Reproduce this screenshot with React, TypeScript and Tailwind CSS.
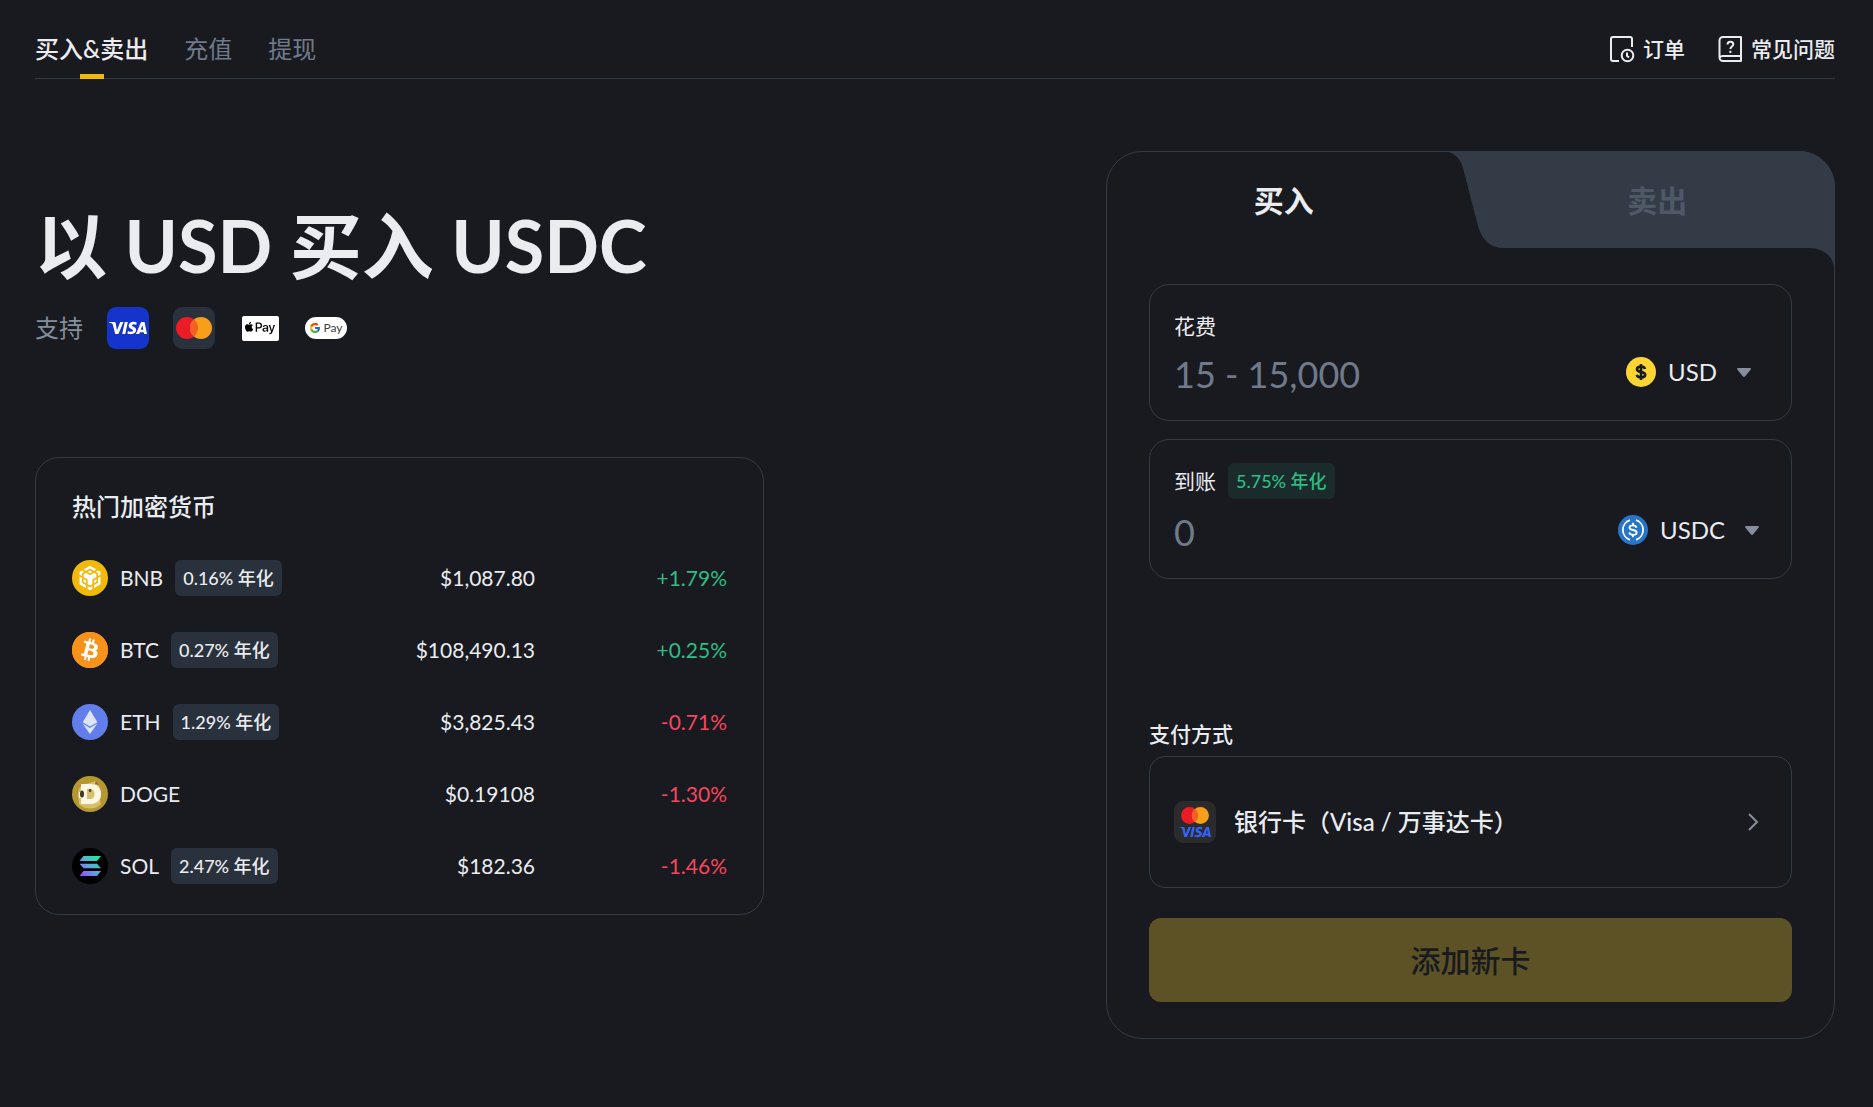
import React from "react";
import { SiBitcoin, SiEthereum, SiVisa } from "react-icons/si";
import { FaApplePay } from "react-icons/fa";
import { FcGoogle } from "react-icons/fc";

function BnbIcon() {
  return (
    <svg viewBox="0 0 24 24" className="size-9 shrink-0" aria-hidden="true">
      <circle cx="12" cy="12" r="12" fill="#F0B90B" />
      <g fill="#fff">
        <path d="M6.6 12v3.17l2.7 1.59v1.86l-4.28-2.51v-5.04L6.6 12ZM6.6 8.83v1.85l-1.58-.93V7.9L6.6 6.97l1.57.93-1.57.93ZM10.43 7.9 12 6.97l1.58.93L12 8.83l-1.57-.93Z" />
        <path d="M7.73 14.52v-1.86l1.57.93v1.85l-1.57-.92ZM10.43 17.43l1.57.93 1.58-.93v1.85L12 20.21l-1.57-.93v-1.85ZM15.82 7.9l1.58-.93 1.57.93v1.85l-1.57.93V8.83l-1.58-.93ZM17.4 15.17V12l1.57-.93v5.04l-4.27 2.51v-1.86l2.7-1.59Z" />
        <path d="m16.27 14.52-1.57.92v-1.85l1.57-.93v1.86ZM16.27 9.48v1.86l-2.69 1.59v3.18L12 17.04l-1.56-.93v-3.18l-2.7-1.59V9.48l1.58-.92L12 10.15l2.69-1.59 1.58.92Z" />
        <path d="M7.73 6.31 12 3.79l4.27 2.52-1.57.93L12 5.64l-2.7 1.6-1.57-.93Z" />
      </g>
    </svg>
  );
}

function BtcIcon() {
  return (
    <svg viewBox="0 0 36 36" className="size-9 shrink-0" aria-hidden="true">
      <circle cx="18" cy="18" r="18" fill="#F7931A" />
      <circle cx="18" cy="18" r="14" fill="#fff" />
      <SiBitcoin size={36} color="#F7931A" />
    </svg>
  );
}

function EthIcon() {
  return (
    <span className="flex size-9 shrink-0 items-center justify-center rounded-full bg-[#627EEA]">
      <SiEthereum className="size-6 text-[#DDE3F8]" aria-hidden="true" />
    </span>
  );
}

function DogeIcon() {
  return (
    <svg viewBox="0 0 36 36" className="size-9 shrink-0" aria-hidden="true">
      <circle cx="18" cy="18" r="18" fill="#B7972F" />
      <path d="M6 19c0-6 3-11 8-11l10-3 3 5c2 3 3 8 1 14l1 4c-6 6-16 6-22 0Z" fill="#D8BF6A" />
      <path
        fillRule="evenodd"
        d="M9 8h9.500c6.500 0 10.500 4 10.500 10s-4 10-10.500 10H9v-6H7v-6h2V8Zm6 5v10h3c3 0 4.500-1.800 4.500-5S21 13 18 13h-3Z"
        fill="#FBF6E6"
      />
      <ellipse cx="10" cy="18" rx="2" ry="3.500" fill="#3F3824" />
      <ellipse cx="18" cy="14.500" rx="1.300" ry="1.800" fill="#5A4A22" />
      <path d="m24 5 3 4-4-1Z" fill="#8A6D22" />
    </svg>
  );
}

function SolIcon() {
  return (
    <svg viewBox="0 0 36 36" className="size-9 shrink-0" aria-hidden="true">
      <defs>
        <linearGradient id="sol" gradientUnits="userSpaceOnUse" x1="27" y1="7" x2="9" y2="29">
          <stop offset="0" stopColor="#14F195" />
          <stop offset="0.5" stopColor="#5FA8DC" />
          <stop offset="1" stopColor="#9945FF" />
        </linearGradient>
      </defs>
      <circle cx="18" cy="18" r="18" fill="#000" />
      <g fill="url(#sol)">
        <path d="M11.500 8h17.500l-4 5h-17.500Z" />
        <path d="M7.500 15.700h17.500l4 4.600h-17.500Z" />
        <path d="M11.500 23h17.500l-4 5h-17.500Z" />
      </g>
    </svg>
  );
}

function UsdIcon() {
  return (
    <svg viewBox="0 0 30 30" className="size-[30px] shrink-0" aria-hidden="true">
      <circle cx="15" cy="15" r="15" fill="#FCD535" />
      <path d="M15 7v16M19 12c-.4-1.500-1.800-2.400-4-2.400-2.400 0-4 1-4 2.700 0 3.900 8.200 1.500 8.200 5.400 0 1.700-1.700 2.700-4.200 2.700-2.300 0-3.900-1-4.300-2.500" fill="none" stroke="#181A20" strokeWidth="2.600" />
    </svg>
  );
}

function UsdcIcon() {
  return (
    <svg viewBox="0 0 30 30" className="size-[30px] shrink-0" aria-hidden="true">
      <circle cx="15" cy="15" r="15" fill="#2775CA" />
      <g fill="none" stroke="#fff" strokeWidth="1.800">
        <path d="M12 5.200a10.300 10.300 0 0 0 0 19.600M18 5.200a10.300 10.300 0 0 1 0 19.600" />
        <path d="M15 7.800v2.400M15 19.800v2.400M18.500 12.700c-.3-1.500-1.600-2.300-3.500-2.300s-3.500.8-3.500 2.300c0 3.400 7.200 1.200 7.200 4.700 0 1.500-1.500 2.400-3.700 2.400-2.100 0-3.500-.9-3.700-2.500" />
      </g>
    </svg>
  );
}

function Mastercard({ className }: { className: string }) {
  return (
    <svg viewBox="0 0 36 22" className={className} aria-hidden="true">
      <circle cx="11" cy="11" r="11" fill="#EB1C26" />
      <circle cx="25" cy="11" r="11" fill="#F79E1B" />
      <path d="M18 2.500a11 11 0 0 1 0 17 11 11 0 0 1 0-17Z" fill="#F26122" />
    </svg>
  );
}

function Caret() {
  return (
    <svg viewBox="0 0 14 9" className="pointer-events-none h-[9px] w-[14px]" aria-hidden="true">
      <path d="M1 0h12c.9 0 1.300.9.700 1.500L8 8.500c-.6.600-1.400.600-2 0L.3 1.500C-.3.900.1 0 1 0Z" fill="#848E9C" />
    </svg>
  );
}

const coins = [
  { name: "BNB", icon: <BnbIcon />, apr: "0.16% 年化", price: "$1,087.80", change: "+1.79%" },
  { name: "BTC", icon: <BtcIcon />, apr: "0.27% 年化", price: "$108,490.13", change: "+0.25%" },
  { name: "ETH", icon: <EthIcon />, apr: "1.29% 年化", price: "$3,825.43", change: "-0.71%" },
  { name: "DOGE", icon: <DogeIcon />, apr: "", price: "$0.19108", change: "-1.30%" },
  { name: "SOL", icon: <SolIcon />, apr: "2.47% 年化", price: "$182.36", change: "-1.46%" },
];

function Header() {
  return (
    <header className="flex h-[79px] items-center justify-between border-b border-[#333B47] pt-5">
      <nav className="flex h-full gap-9 text-2xl text-[#707A8A]">
        <a href="#trade" className="relative flex items-center font-medium text-[#EAECEF]">
          买入&amp;卖出
          <span className="absolute -bottom-px left-1/2 h-[5px] w-6 -translate-x-1/2 bg-[#F0B90B]" />
        </a>
        <a href="#deposit" className="flex items-center">充值</a>
        <a href="#withdraw" className="flex items-center">提现</a>
      </nav>
      <div className="flex gap-8 text-[21px] leading-8 font-medium">
        <a href="#orders" className="flex items-center gap-2">
          <svg viewBox="0 0 26 28" className="h-7 w-[26px]" fill="none" stroke="currentColor" strokeWidth="2" aria-hidden="true">
            <path d="M10 26H4a2 2 0 0 1-2-2V4a2 2 0 0 1 2-2h17a2 2 0 0 1 2 2v8" />
            <circle cx="18.500" cy="20.500" r="5.800" />
            <path d="M18 17.500v3.300l2 1.700" />
          </svg>
          订单
        </a>
        <a href="#faq" className="flex items-center gap-2">
          <svg viewBox="0 0 26 28" className="h-7 w-[26px]" fill="none" stroke="currentColor" strokeWidth="2" aria-hidden="true">
            <path d="M24 21V2H6a3.500 3.500 0 0 0-3.500 3.500v17A3.500 3.500 0 0 0 6 26h18v-5H6a3.500 3.500 0 0 0-3.500 2" strokeLinejoin="round" />
            <path d="M10.500 9.500c0-1.700 1.200-2.700 2.900-2.700s2.900 1 2.900 2.500c0 2.200-2.900 2.200-2.900 4.700M13.400 15.700v2.300" />
          </svg>
          常见问题
        </a>
      </div>
    </header>
  );
}

function PopularCoins() {
  return (
    <section className="mt-[108px] rounded-3xl border border-[#333B47] px-9 pt-[31px] pb-3">
      <h2 className="text-2xl leading-9 font-medium">热门加密货币</h2>
      <table className="mt-[17px] w-full table-fixed text-[21px]">
        <tbody>
          {coins.map((c) => (
            <tr key={c.name} className="h-[72px]">
              <th scope="row" className="w-[42%] p-0 text-left font-normal">
                <div className="flex items-center gap-3">
                  {c.icon}
                  <span>{c.name}</span>
                  {c.apr && (
                    <span className="flex h-9 items-center rounded-md bg-[#29313D] px-2 text-lg font-medium">
                      {c.apr}
                    </span>
                  )}
                </div>
              </th>
              <td className="p-0 text-right">{c.price}</td>
              <td className={c.change.startsWith("+") ? "w-[192px] p-0 text-right text-[#2EBD85]" : "w-[192px] p-0 text-right text-[#F6465D]"}>
                {c.change}
              </td>
            </tr>
          ))}
        </tbody>
      </table>
    </section>
  );
}

function Intro() {
  return (
    <div className="w-full max-w-[729px] pt-[46px]">
      <h1 className="text-[72px] leading-[96px] font-bold">以 USD 买入 USDC</h1>
      <div className="mt-[14px] flex items-center gap-6">
        <span className="text-2xl text-[#848E9C]">支持</span>
        <span className="flex size-[42px] items-center justify-center rounded-[9px] bg-[#1434CB]">
          <SiVisa className="size-[38px] text-white" title="Visa" />
        </span>
        <span className="flex size-[42px] items-center justify-center rounded-[9px] bg-[#29313D]">
          <Mastercard className="h-[22px] w-9" />
        </span>
        <span className="flex w-[42px] justify-center">
          <span className="flex h-[25px] w-[37px] items-center justify-center rounded-xs bg-white">
            <FaApplePay className="size-[30px] text-black" title="Apple Pay" />
          </span>
        </span>
        <span className="flex h-[22px] w-[42px] items-center justify-center rounded-full bg-white text-xs text-[#3C4043]">
          <FcGoogle className="size-3" title="Google" />
          <span className="ml-0.5">Pay</span>
        </span>
      </div>
      <PopularCoins />
    </div>
  );
}

function TradeCard() {
  return (
    <form className="w-full max-w-[729px] rounded-[36px] border border-[#333B47] pb-9">
      <div className="grid grid-cols-2 gap-5 text-3xl font-bold" role="tablist">
        <button type="button" role="tab" aria-selected="true" className="h-24">
          买入
        </button>
        <button type="button" role="tab" aria-selected="false" className="relative h-24 text-[#4F5867]">
          <svg viewBox="0 0 395 118" className="absolute -top-px -right-px h-[118px] w-[395px]" aria-hidden="true">
            <path d="M0 0C13 0 20 6 23 17L38 75C42 89 50 97 64 97H369C384 97 394 106 394 118H395V36C395 16 379 0 359 0Z" fill="#333B47" />
          </svg>
          <span className="relative">卖出</span>
        </button>
      </div>

      <div className="px-[42px] pt-9">
        <div className="rounded-[20px] border border-[#333B47] px-6 pt-[23px] pb-[18px]">
          <label htmlFor="spend" className="block text-[21px] leading-9">花费</label>
          <div className="mt-0.5 flex h-14 items-center justify-between">
            <input id="spend" placeholder="15 - 15,000" className="w-full min-w-0 bg-transparent text-[36px] leading-[54px] outline-none placeholder:text-[#707A8A]" />
            <label className="flex items-center pr-4 pb-1 text-2xl">
              <UsdIcon />
              <select aria-label="支付货币" className="mr-5 ml-3 appearance-none bg-transparent [field-sizing:content]">
                <option>USD</option>
              </select>
              <Caret />
            </label>
          </div>
        </div>

        <div className="mt-[18px] rounded-[20px] border border-[#333B47] px-6 pt-[23px] pb-[19px]">
          <div className="flex items-center gap-3">
            <label htmlFor="receive" className="text-[21px] leading-9">到账</label>
            <span className="flex h-9 items-center rounded-md bg-[#1B2B2B] px-2 text-lg font-medium text-[#2EBD85]">5.75% 年化</span>
          </div>
          <div className="mt-1.5 flex h-[54px] items-center justify-between">
            <input id="receive" placeholder="0" className="w-full min-w-0 bg-transparent text-[36px] leading-[54px] outline-none placeholder:text-[#707A8A]" />
            <label className="flex items-center pr-2 pb-1 text-2xl">
              <UsdcIcon />
              <select aria-label="购买币种" className="mr-5 ml-3 appearance-none bg-transparent [field-sizing:content]">
                <option>USDC</option>
              </select>
              <Caret />
            </label>
          </div>
        </div>

        <h2 className="mt-[137px] text-[21px] leading-9 font-medium">支付方式</h2>
        <button type="button" className="mt-1 flex h-[132px] w-full items-center rounded-2xl border border-[#333B47] px-6 text-2xl font-medium">
          <span className="flex size-[42px] shrink-0 flex-col items-center justify-center gap-0.5 overflow-hidden rounded-[9px] bg-[#2B2B2B]">
            <Mastercard className="h-[17px] w-7 shrink-0" />
            <SiVisa className="-my-2.5 size-8 shrink-0 text-[#3461F5]" aria-hidden="true" />
          </span>
          <span className="ml-[18px]">银行卡（Visa / 万事达卡）</span>
          <svg viewBox="0 0 12 20" className="mr-2 ml-auto h-5 w-3" fill="none" stroke="#848E9C" strokeWidth="2" aria-hidden="true">
            <path d="m2 2 8 8-8 8" />
          </svg>
        </button>
        <button type="button" disabled className="mt-[30px] h-[84px] w-full rounded-xl bg-[#5D5226] text-3xl font-medium text-[#181A20]">
          添加新卡
        </button>
      </div>
    </form>
  );
}

export default function App() {
  return (
    <div className="min-h-screen bg-[#181A20] pr-[38px] pl-[35px] font-['Lato','Noto_Sans_CJK_SC',sans-serif] text-[#EAECEF]">
      <Header />
      <main className="flex items-start justify-between gap-12 pt-[72px]">
        <Intro />
        <TradeCard />
      </main>
    </div>
  );
}
